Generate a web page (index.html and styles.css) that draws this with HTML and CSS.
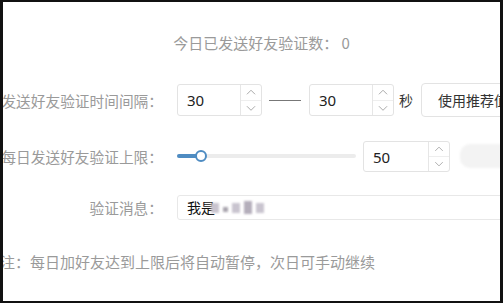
FILE: index.html
```html
<!DOCTYPE html>
<html lang="zh-CN">
<head>
    <meta charset="UTF-8">
    <meta name="viewport" content="width=device-width, initial-scale=1.0">
    <title>好友验证设置</title>
    <link rel="stylesheet" href="styles.css">
</head>
<body>

    <div class="frame">
        <!-- today count -->
        <div class="count">今日已发送好友验证数： 0</div>

        <div class="form">
            <!-- interval -->
            <div class="row row-interval">
                <div class="label"><span>发送好友验证时间间隔：</span></div>
                <div class="field">
                    <div class="num">
                        <span class="num-val">30</span>
                        <span class="spin">
                            <svg class="arrow" viewBox="0 0 12 8"><path d="M1 6.5 L6 1.5 L11 6.5"/></svg>
                            <svg class="arrow" viewBox="0 0 12 8"><path d="M1 1.5 L6 6.5 L11 1.5"/></svg>
                        </span>
                    </div>
                    <span class="dash"></span>
                    <div class="num">
                        <span class="num-val">30</span>
                        <span class="spin">
                            <svg class="arrow" viewBox="0 0 12 8"><path d="M1 6.5 L6 1.5 L11 6.5"/></svg>
                            <svg class="arrow" viewBox="0 0 12 8"><path d="M1 1.5 L6 6.5 L11 1.5"/></svg>
                        </span>
                    </div>
                    <span class="unit">秒</span>
                    <button class="btn">使用推荐值</button>
                </div>
            </div>

            <!-- daily limit -->
            <div class="row row-limit">
                <div class="label"><span>每日发送好友验证上限：</span></div>
                <div class="field">
                    <div class="slider">
                        <span class="slider-fill"></span>
                        <span class="slider-knob"></span>
                    </div>
                    <div class="num num-limit">
                        <span class="num-val">50</span>
                        <span class="spin">
                            <svg class="arrow" viewBox="0 0 12 8"><path d="M1 6.5 L6 1.5 L11 6.5"/></svg>
                            <svg class="arrow" viewBox="0 0 12 8"><path d="M1 1.5 L6 6.5 L11 1.5"/></svg>
                        </span>
                    </div>
                    <span class="ghost"></span>
                </div>
            </div>

            <!-- message -->
            <div class="row row-msg">
                <div class="label"><span>验证消息：</span></div>
                <div class="field">
                    <div class="text-input">
                        我是<span class="blur"><i></i><i class="b2"></i><i></i><i class="b3"></i><i></i></span>
                    </div>
                </div>
            </div>
        </div>

        <p class="note">注：每日加好友达到上限后将自动暂停，次日可手动继续</p>
    </div>

</body>
</html>
```

FILE: styles.css
```css
* {
    box-sizing: border-box;
}

body {
    margin: 0;
    background: #fff;
    font-family: "Noto Sans CJK SC", "Noto Sans", sans-serif;
}

.frame {
    width: 503px;
    height: 303px;
    border: 2px solid #111;
    border-left-width: 3px;
    border-right-width: 3px;
    background: #fff;
    overflow: hidden;
}

.count {
    margin-top: 29px;
    padding-left: 20px;
    text-align: center;
    font-size: 15px;
    line-height: 24px;
    color: #9a9a9a;
}

.form {
    margin-top: 28px;
}

.row {
    display: flex;
    align-items: center;
}

.row-interval {
    height: 34px;
}

.row-limit {
    height: 32px;
    margin-top: 23px;
}

.row-msg {
    height: 25px;
    margin-top: 23px;
}

/* right aligned label, overflows to the left edge */
.label {
    width: 160px;
    flex: none;
    display: flex;
    justify-content: flex-end;
    white-space: nowrap;
    font-size: 14.7px;
    color: #9a9a9a;
}

.field {
    display: flex;
    align-items: center;
    margin-left: 14px;
    flex: none;
    white-space: nowrap;
}

.num {
    display: flex;
    width: 85px;
    height: 32px;
    border: 1px solid #e3e3e3;
    border-radius: 3px;
    background: #fff;
}

.num-val {
    flex: 1;
    padding-left: 9px;
    font-size: 15px;
    line-height: 30px;
    color: #222;
    font-family: "Noto Sans", sans-serif;
}

.spin {
    width: 21px;
    display: flex;
    flex-direction: column;
    border-left: 1px solid #e6e6e6;
}

.arrow {
    flex: 1;
    width: 100%;
    height: 15px;
    padding: 4px 5px;
    fill: none;
    stroke: #a8a8a8;
    stroke-width: 1.2;
}

.arrow + .arrow {
    border-top: 1px solid #eeeeee;
}

.dash {
    width: 32px;
    height: 1px;
    background: #777;
    margin: 0 8px 0 7px;
}

.unit {
    margin: 0 8px 0 5px;
    font-size: 14px;
    color: #333;
}

.btn {
    height: 34px;
    padding: 0 0 0 16px;
    width: 110px;
    text-align: left;
    border: 1px solid #e3e3e3;
    border-radius: 4px;
    background: #fff;
    font-family: inherit;
    font-size: 14px;
    color: #333;
}

/* slider */
.slider {
    position: relative;
    width: 179px;
    height: 4px;
    background: #ececec;
    border-radius: 2px;
}

.slider-fill {
    position: absolute;
    left: 0;
    top: 0;
    width: 22px;
    height: 4px;
    border-radius: 2px;
    background: #4f8cc2;
}

.slider-knob {
    position: absolute;
    left: 18px;
    top: -4px;
    width: 12px;
    height: 12px;
    border: 2px solid #4f8cc2;
    border-radius: 50%;
    background: #fff;
}

.num-limit {
    width: 87px;
    height: 31px;
    margin-left: 7px;
}

.ghost {
    width: 60px;
    height: 24px;
    margin-left: 10px;
    border-radius: 10px;
    background: #f3f3f3;
    filter: blur(1px);
}

/* message input */
.text-input {
    width: 340px;
    height: 25px;
    border: 1px solid #e8e8e8;
    border-radius: 3px;
    padding-left: 9px;
    font-size: 14px;
    line-height: 23px;
    color: #111;
    display: flex;
    align-items: center;
}

.blur {
    display: inline-flex;
    align-items: center;
    gap: 4px;
    margin-left: -4px;
    filter: blur(1px);
}

.blur i {
    display: block;
    width: 8px;
    height: 10px;
    background: #c9c4cf;
}

.blur .b2 {
    width: 5px;
    height: 5px;
    background: #a8a4ad;
    margin-top: 4px;
}

.blur .b3 {
    height: 13px;
    background: #b4aebb;
}

.note {
    margin: 30px 0 0 -3px;
    font-size: 15px;
    line-height: 24px;
    color: #9a9a9a;
    white-space: nowrap;
}
```
